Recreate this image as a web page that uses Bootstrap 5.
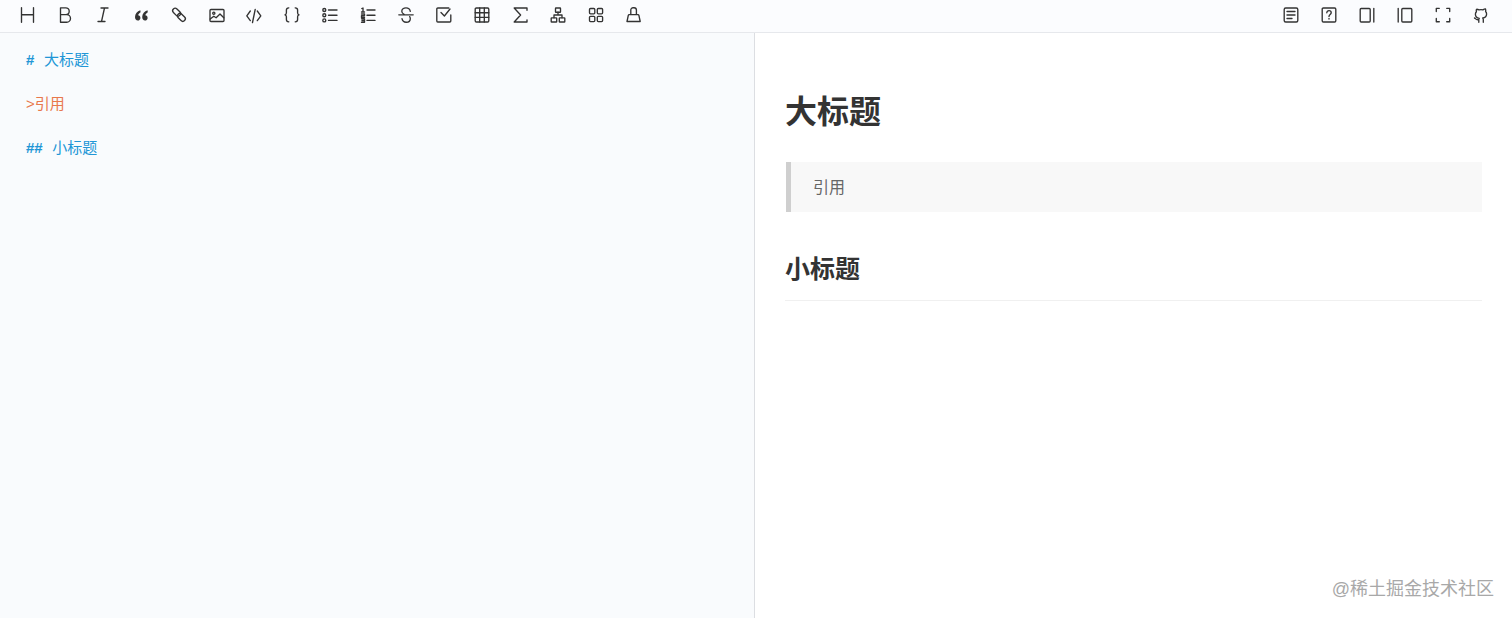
<!DOCTYPE html>
<html lang="zh">
<head>
<meta charset="utf-8">
<title>Markdown editor</title>
<link href="https://cdn.jsdelivr.net/npm/bootstrap@5.3.0/dist/css/bootstrap.min.css" rel="stylesheet">
<style>
html,body{height:100%;overflow:hidden}
body{font-family:"Liberation Sans","Noto Sans CJK SC",sans-serif;background:#fff;color:#333}
.shell{height:618px}
.tools{height:33px;background:#fbfcfe;border-bottom:1px solid #e6e8ec;padding:0 12px 0 8px;flex:none}
.tbtn{width:37.93px;height:32px;display:flex;align-items:center;justify-content:center;padding:0 0 3px;border:0;background:none}
.tbtn svg{width:16px;height:16px;fill:none;stroke:#333;stroke-width:1.35;stroke-linecap:round;stroke-linejoin:round;overflow:visible}
.tbtn svg .solid{fill:#333;stroke:none}
.panes{flex:1;min-height:0}
.source{width:755px;background:#f9fbfd;border-right:1px solid #dcdee2;padding:15px 26px;font-size:15px;line-height:24px;flex:none}
.source p{margin:0 0 20px;height:24px;white-space:pre}
.mk-mark{font-weight:700;margin-right:5.500px}
.mk-head{color:#2196d6}
.mk-quote{color:#e8784c}
.preview{flex:1;padding:0 30px;position:relative;min-width:0}
.h-big{font-size:32px;font-weight:700;color:#333;line-height:40px;margin:59px 0 0}
.quote-box{background:#f8f8f8;border-left:5px solid #cfcfcf;height:50px;margin:30px 0 0 1px;padding:0 22px;font-size:16px;line-height:51px;color:#666}
.h-small{font-size:25px;font-weight:700;color:#333;line-height:34px;margin:40px 0 0;padding-bottom:14px;border-bottom:1px solid #f0f0f0}
.wmark{position:absolute;right:18px;bottom:17px;font-size:18px;line-height:24px;color:#a8a8a8}
</style>
</head>
<body>
<div class="shell d-flex flex-column">
  <div class="tools d-flex justify-content-between">
    <div class="d-flex">
      <button class="tbtn" aria-label="heading"><svg viewBox="0 0 16 16"><path d="M2.500.7v14.600M14.500.7v14.600M2.500 7.700h12"/></svg></button>
      <button class="tbtn" aria-label="bold"><svg viewBox="0 0 16 16"><path d="M3.500.8h5.300a3.400 3.400 0 0 1 0 6.800H3.500zM3.500 7.600h6.200a3.800 3.800 0 0 1 0 7.600H3.500z"/></svg></button>
      <button class="tbtn" aria-label="italic"><svg viewBox="0 0 16 16"><path d="M6 1h7M3 14.500h7M9.500 1 6.500 14.500"/></svg></button>
      <button class="tbtn" aria-label="quote"><svg viewBox="0 0 16 16"><path class="solid" d="M7.300 3.300C4.300 4.500 2 6.800 2 10c0 2.200 1.200 3.500 2.800 3.500 1.500 0 2.600-1.100 2.600-2.600 0-1.400-1-2.500-2.300-2.600.3-1.100 1.100-2.200 2.500-3.100zM14.500 3.300c-3 1.200-5.300 3.500-5.300 6.700 0 2.200 1.200 3.500 2.800 3.500 1.500 0 2.600-1.100 2.600-2.600 0-1.400-1-2.500-2.300-2.600.3-1.100 1.100-2.200 2.500-3.100z"/></svg></button>
      <button class="tbtn" aria-label="link"><svg viewBox="0 0 16 16"><rect x="1.100" y="2.700" width="9" height="5" rx="2.500" transform="rotate(45 5.600 5.200)"/><rect x="5.900" y="7.900" width="9" height="5" rx="2.500" transform="rotate(45 10.400 10.400)"/></svg></button>
      <button class="tbtn" aria-label="image"><svg viewBox="0 0 16 16"><rect x="1" y="2.500" width="14" height="12" rx="1"/><circle cx="4.800" cy="6.200" r="1.100"/><path d="m1.200 12 3.600-2.800 2.300 1.600L11 7l3.800 3.800"/></svg></button>
      <button class="tbtn" aria-label="inline code"><svg viewBox="0 0 16 16"><path d="M4.300 4 .8 8.800l3.500 4.800M11.300 4l3.500 4.800-3.500 4.800M9.200 2.500l-2.700 13"/></svg></button>
      <button class="tbtn" aria-label="code block"><svg viewBox="0 0 16 16"><path d="M4.800.8C3 .8 2.400 1.600 2.400 3v2.800c0 1.100-.4 1.700-1.400 2 1 .3 1.400.9 1.400 2v2.800c0 1.400.6 2.200 2.400 2.200M11.200.8c1.800 0 2.400.8 2.400 2.200v2.800c0 1.100.4 1.700 1.400 2-1 .3-1.400.9-1.400 2v2.800c0 1.400-.6 2.200-2.400 2.200"/></svg></button>
      <button class="tbtn" aria-label="unordered list"><svg viewBox="0 0 16 16"><circle cx="2.300" cy="3" r="1.500"/><circle cx="2.300" cy="8.200" r="1.500"/><circle cx="2.300" cy="13.400" r="1.500"/><path d="M6.500 3h8.500M6.500 8.200h8.500M6.500 13.400h8.500"/></svg></button>
      <button class="tbtn" aria-label="ordered list"><svg viewBox="0 0 16 16"><path d="M1.800 1.500 3 1v4M1.500 5h3M1.500 7h3v1.700h-3v1.800h3M1.500 11.800h3v3.400h-3M2 13.500h2.500M7 3h8M7 8.200h8M7 13.400h8"/></svg></button>
      <button class="tbtn" aria-label="strikethrough"><svg viewBox="0 0 16 16"><path d="M.8 7.800h14.400M12.300 4.300C11.900 2.100 10.200.9 8 .9 5.600.9 3.800 2.200 3.800 4.300c0 1.300.8 2.400 2.300 3M4 11.600c.4 2.400 2 3.600 4.200 3.600 2.400 0 4.100-1.400 4.100-3.500 0-.8-.2-1.500-.6-2.100"/></svg></button>
      <button class="tbtn" aria-label="task"><svg viewBox="0 0 16 16"><path d="M14.800 8v6a1 1 0 0 1-1 1H1.800a1 1 0 0 1-1-1V2a1 1 0 0 1 1-1h11"/><path d="m5 5.500 3.400 3.500 5.600-7"/></svg></button>
      <button class="tbtn" aria-label="table"><svg viewBox="0 0 16 16"><rect x="1.200" y="1" width="13.600" height="14" rx="1.200"/><path d="M1.200 5.700h13.600M1.200 10.300h13.600M5.700 1v14M10.300 1v14"/></svg></button>
      <button class="tbtn" aria-label="formula"><svg viewBox="0 0 16 16"><path d="M15 3.200V1H2.200l6.400 7-6.400 7H15v-2.200"/></svg></button>
      <button class="tbtn" aria-label="diagram"><svg viewBox="0 0 16 16"><rect x="5.500" y="1" width="5" height="4.200" rx=".5"/><rect x="1.200" y="10.800" width="5.500" height="4.200" rx=".5"/><rect x="9.300" y="10.800" width="5.500" height="4.200" rx=".5"/><path d="M8 5.200V8M4 10.800V8h8v2.800"/></svg></button>
      <button class="tbtn" aria-label="toc"><svg viewBox="0 0 16 16"><rect x="1.500" y="1.500" width="5.300" height="5.300" rx="1"/><rect x="9.300" y="1.500" width="5.300" height="5.300" rx="1"/><rect x="1.500" y="9.300" width="5.300" height="5.300" rx="1"/><rect x="9.300" y="9.300" width="5.300" height="5.300" rx="1"/></svg></button>
      <button class="tbtn" aria-label="clean"><svg viewBox="0 0 16 16"><path d="M1 14.500 2.300 8.400a1 1 0 0 1 1-.8h8.600a1 1 0 0 1 1 .8l1.300 6.100zM4.800 7.600V3a2.300 2.300 0 0 1 2.300-2.300h1A2.300 2.300 0 0 1 10.400 3v4.600"/></svg></button>
    </div>
    <div class="d-flex">
      <button class="tbtn" aria-label="outline"><svg viewBox="0 0 16 16"><rect x="1.200" y="1" width="13.600" height="14" rx="1.500"/><path d="M4 4.500h8M4 8h8M4 11.500h5"/></svg></button>
      <button class="tbtn" aria-label="help"><svg viewBox="0 0 16 16"><rect x="1.200" y="1" width="13.600" height="14" rx="1.200"/><path d="M5.800 5.800c0-1.300 1-2.200 2.200-2.200s2.200.9 2.200 2.100c0 1.800-2.200 1.800-2.200 3.700"/><path d="M8 11.300v.8"/></svg></button>
      <button class="tbtn" aria-label="preview only"><svg viewBox="0 0 16 16"><rect x="1.200" y="1.500" width="10" height="13.500" rx="1"/><path d="M14.800 1.500V15"/></svg></button>
      <button class="tbtn" aria-label="editor only"><svg viewBox="0 0 16 16"><rect x="4.800" y="1.500" width="10" height="13.500" rx="1"/><path d="M1.200 1.500V15"/></svg></button>
      <button class="tbtn" aria-label="fullscreen"><svg viewBox="0 0 16 16"><path d="M1.300 4.500V1.300h3M11.700 1.300h3v3.200M14.700 11.500v3.200h-3M4.300 14.700h-3v-3.200"/></svg></button>
      <button class="tbtn" aria-label="github"><svg viewBox="0 0 16 16"><path d="M5.800 15.300v-2.700c-2.800.8-3.300-1.300-4.300-1.600M10.300 15.300v-2.700c0-.8-.2-1.300-.6-1.700 2.200-.3 3.900-1.300 3.900-4 0-1-.4-1.900-1-2.500.2-.8.200-1.700-.1-2.500 0 0-.9-.2-2.600 1a8 8 0 0 0-3.800 0C4.400 2.100 3.500 2.300 3.500 2.300c-.3.800-.3 1.700-.1 2.500-.6.600-1 1.500-1 2.500 0 2.700 1.700 3.700 3.900 4-.3.300-.5.700-.5 1.100"/></svg></button>
    </div>
  </div>
  <div class="panes d-flex">
    <div class="source">
      <p class="mk-head"><span class="mk-mark">#</span> 大标题</p>
      <p class="mk-quote">&gt;引用</p>
      <p class="mk-head"><span class="mk-mark">##</span> 小标题</p>
    </div>
    <div class="preview">
      <h1 class="h-big">大标题</h1>
      <div class="quote-box">引用</div>
      <h2 class="h-small">小标题</h2>
      <div class="wmark">@稀土掘金技术社区</div>
    </div>
  </div>
</div>
<script src="https://cdn.jsdelivr.net/npm/bootstrap@5.3.0/dist/js/bootstrap.bundle.min.js"></script>
</body>
</html>
